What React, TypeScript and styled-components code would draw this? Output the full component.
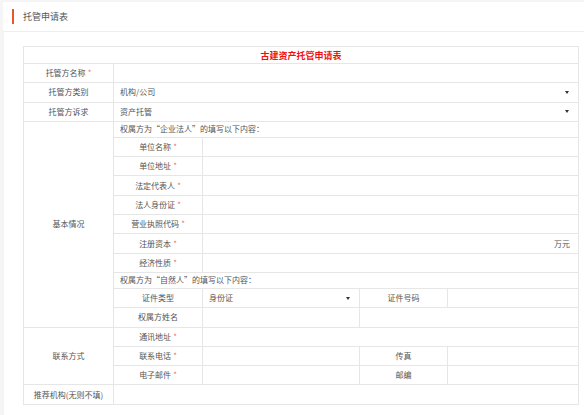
import React from "react";
import styled, { createGlobalStyle } from "styled-components";

const GlobalStyle = createGlobalStyle`
  html, body {
    margin: 0;
    padding: 0;
    background: #f5f5f5;
    font-family: "Noto Sans CJK SC", "Noto Sans", sans-serif;
  }
`;

const Page = styled.div`
  width: 584px;
  height: 415px;
  padding-top: 2px;
  box-sizing: border-box;
  overflow: hidden;
`;

const Header = styled.div`
  margin-left: 3px;
  height: 29px;
  background: #fff;
  border-bottom: 1px solid #eeeeee;
  display: flex;
  align-items: center;
`;

const HeaderBar = styled.span`
  width: 2px;
  height: 15px;
  margin-left: 9px;
  background: #e8582c;
`;

const HeaderTitle = styled.span`
  margin-left: 9px;
  font-size: 9px;
  color: #555;
`;

const Body = styled.div`
  margin-left: 4px;
  height: 384px;
  background: #fff;
  padding: 14px 0 0 19px;
  box-sizing: border-box;
`;

const Table = styled.table`
  width: 555px;
  border-collapse: collapse;
  table-layout: fixed;
  font-size: 8px;
  color: #555;
`;

const Row = styled.tr<{ $h?: number }>`
  height: ${(p) => p.$h ?? 19.3}px;
`;

const Cell = styled.td<{ $align?: "left" | "center" }>`
  border: 1px solid #e6e6e6;
  padding: 0 6px;
  text-align: ${(p) => p.$align ?? "center"};
  vertical-align: middle;
  white-space: nowrap;
  line-height: 1;
`;

const TitleCell = styled.td`
  border: 1px solid #e6e6e6;
  text-align: center;
  font-size: 9px;
  font-weight: bold;
  color: #f20f0f;
  line-height: 1;
`;

const Required = styled.span`
  color: #f56c6c;
  margin-left: 2px;
`;

const SelectBox = styled.div`
  display: flex;
  align-items: center;
  justify-content: space-between;
  padding-right: 3px;
`;

const Arrow = styled.span`
  width: 0;
  height: 0;
  border-left: 2px solid transparent;
  border-right: 2px solid transparent;
  border-top: 3px solid #333;
`;

const Suffix = styled.div`
  display: flex;
  justify-content: flex-end;
  padding-right: 2px;
`;

const Label = ({ text, required }: { text: string; required?: boolean }) => (
  <>
    {text}
    {required && <Required>*</Required>}
  </>
);

const Select = ({ value }: { value: string }) => (
  <SelectBox>
    <span>{value}</span>
    <Arrow />
  </SelectBox>
);

const companyFields = [
  { label: "单位名称", suffix: "" },
  { label: "单位地址", suffix: "" },
  { label: "法定代表人", suffix: "" },
  { label: "法人身份证", suffix: "" },
  { label: "营业执照代码", suffix: "" },
  { label: "注册资本", suffix: "万元" },
  { label: "经济性质", suffix: "" },
];

export default function App() {
  return (
    <>
      <GlobalStyle />
      <Page>
        <Header>
          <HeaderBar />
          <HeaderTitle>托管申请表</HeaderTitle>
        </Header>
        <Body>
          <Table>
            <colgroup>
              <col style={{ width: 90 }} />
              <col style={{ width: 89 }} />
              <col style={{ width: 157 }} />
              <col style={{ width: 88 }} />
              <col style={{ width: 131 }} />
            </colgroup>
            <tbody>
              <Row $h={17}>
                <TitleCell colSpan={5}>古建资产托管申请表</TitleCell>
              </Row>
              <Row>
                <Cell>
                  <Label text="托管方名称" required />
                </Cell>
                <Cell colSpan={4} />
              </Row>
              <Row>
                <Cell>托管方类别</Cell>
                <Cell colSpan={4} $align="left">
                  <Select value="机构/公司" />
                </Cell>
              </Row>
              <Row>
                <Cell>托管方诉求</Cell>
                <Cell colSpan={4} $align="left">
                  <Select value="资产托管" />
                </Cell>
              </Row>
              <Row $h={16}>
                <Cell rowSpan={11}>基本情况</Cell>
                <Cell colSpan={4} $align="left">
                  权属方为“企业法人”的填写以下内容：
                </Cell>
              </Row>
              {companyFields.map((f) => (
                <Row key={f.label}>
                  <Cell>
                    <Label text={f.label} required />
                  </Cell>
                  <Cell colSpan={3} $align="left">
                    {f.suffix && <Suffix>{f.suffix}</Suffix>}
                  </Cell>
                </Row>
              ))}
              <Row $h={16}>
                <Cell colSpan={4} $align="left">
                  权属方为“自然人”的填写以下内容：
                </Cell>
              </Row>
              <Row>
                <Cell>证件类型</Cell>
                <Cell $align="left">
                  <Select value="身份证" />
                </Cell>
                <Cell>证件号码</Cell>
                <Cell />
              </Row>
              <Row>
                <Cell>权属方姓名</Cell>
                <Cell />
                <Cell colSpan={2} />
              </Row>
              <Row>
                <Cell rowSpan={3}>联系方式</Cell>
                <Cell>
                  <Label text="通讯地址" required />
                </Cell>
                <Cell colSpan={3} />
              </Row>
              <Row>
                <Cell>
                  <Label text="联系电话" required />
                </Cell>
                <Cell />
                <Cell>传真</Cell>
                <Cell />
              </Row>
              <Row>
                <Cell>
                  <Label text="电子邮件" required />
                </Cell>
                <Cell />
                <Cell>邮编</Cell>
                <Cell />
              </Row>
              <Row>
                <Cell>推荐机构(无则不填)</Cell>
                <Cell colSpan={4} />
              </Row>
            </tbody>
          </Table>
        </Body>
      </Page>
    </>
  );
}
